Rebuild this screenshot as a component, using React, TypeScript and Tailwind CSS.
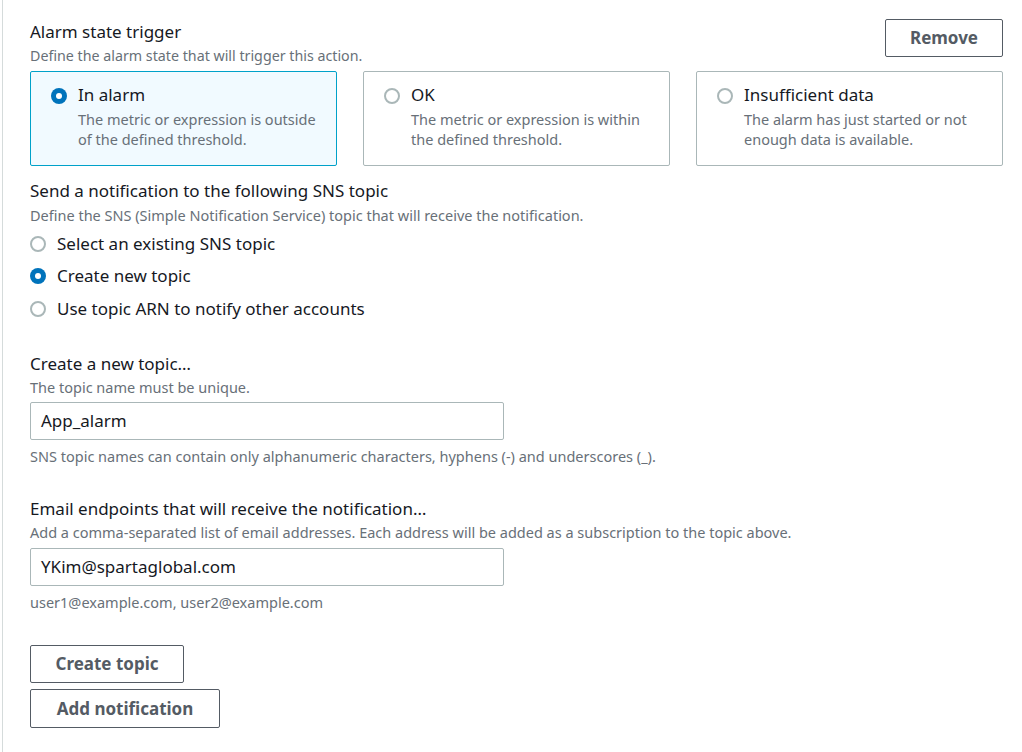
import React from 'react';

const font = { fontFamily: '"Noto Sans", "Open Sans", Arial, sans-serif' };

function Radio({ checked }: { checked: boolean }) {
  return checked ? (
    <span className="w-4 h-4 rounded-full bg-[#0073bb] flex items-center justify-center shrink-0">
      <span className="block w-1.5 h-1.5 rounded-full bg-white" />
    </span>
  ) : (
    <span className="block w-4 h-4 rounded-full border-2 border-[#aab7b8] bg-white shrink-0" />
  );
}

const states = [
  { label: 'In alarm', desc: 'The metric or expression is outside of the defined threshold.', checked: true },
  { label: 'OK', desc: 'The metric or expression is within the defined threshold.', checked: false },
  { label: 'Insufficient data', desc: 'The alarm has just started or not enough data is available.', checked: false },
];

const topics = [
  { label: 'Select an existing SNS topic', checked: false },
  { label: 'Create new topic', checked: true },
  { label: 'Use topic ARN to notify other accounts', checked: false },
];

export default function App() {
  return (
    <div style={font} className="w-[1022px] h-[752px] bg-white flex overflow-hidden text-[#16191f]">
      <div className="w-[3px] shrink-0 border-r border-[#d5dbdb]" />
      <div className="flex-1 pl-[27px] pr-[19px]">
        <div className="flex justify-between items-start pt-[19px]">
          <div className="pt-[3px]">
            <h3 className="text-[17px] leading-[20px]">Alarm state trigger</h3>
            <p className="text-[14.25px] leading-[20px] text-[#687078] mt-[4px]">Define the alarm state that will trigger this action.</p>
          </div>
          <button className="w-[118px] h-[38px] border border-[#545b64] rounded-[2px] text-[17px] font-bold text-[#545b64]">Remove</button>
        </div>

        <div className="grid grid-cols-3 gap-[26px] mt-[5px]">
          {states.map((s) => (
            <div
              key={s.label}
              className={`h-[95px] rounded-[2px] border pl-[20px] pr-[6px] pt-[13px] flex gap-[11px] ${s.checked ? 'bg-[#f1faff] border-[#00a1c9]' : 'bg-white border-[#aab7b8]'}`}
            >
              <div className="pt-[3px]"><Radio checked={s.checked} /></div>
              <div>
                <div className="text-[17px] leading-[20px]">{s.label}</div>
                <div className="text-[14.5px] leading-[20px] text-[#687078] mt-[4px]">{s.desc}</div>
              </div>
            </div>
          ))}
        </div>

        <h3 className="text-[17px] leading-[20px] mt-[15px]">Send a notification to the following SNS topic</h3>
        <p className="text-[14.5px] leading-[20px] text-[#687078] mt-[4px]">Define the SNS (Simple Notification Service) topic that will receive the notification.</p>
        <div className="flex flex-col gap-[11.5px] mt-[8px]">
          {topics.map((t) => (
            <label key={t.label} className="flex items-center gap-[11px] h-[21px]">
              <Radio checked={t.checked} />
              <span className="text-[17px] leading-[20px]">{t.label}</span>
            </label>
          ))}
        </div>

        <h3 className="text-[17px] leading-[20px] mt-[35px]">Create a new topic…</h3>
        <p className="text-[14.5px] leading-[20px] text-[#687078] mt-[3px]">The topic name must be unique.</p>
        <div className="w-[474px] h-[38px] border border-[#aab7b8] rounded-[2px] mt-[5px] px-[10px] flex items-center text-[17px]">App_alarm</div>
        <p className="text-[14.5px] leading-[20px] text-[#687078] mt-[6px]">SNS topic names can contain only alphanumeric characters, hyphens (-) and underscores (_).</p>

        <h3 className="text-[17px] leading-[20px] mt-[33px]">Email endpoints that will receive the notification…</h3>
        <p className="text-[14.5px] leading-[20px] text-[#687078] mt-[3px]">Add a comma-separated list of email addresses. Each address will be added as a subscription to the topic above.</p>
        <div className="w-[474px] h-[38px] border border-[#aab7b8] rounded-[2px] mt-[6px] px-[10px] flex items-center text-[17px]">YKim@spartaglobal.com</div>
        <p className="text-[14.5px] leading-[20px] text-[#687078] mt-[6px]">user1@example.com, user2@example.com</p>

        <div className="flex flex-col items-start gap-[6px] mt-[33px]">
          <button className="w-[154px] h-[38px] border border-[#545b64] rounded-[2px] text-[17px] font-bold text-[#545b64]">Create topic</button>
          <button className="w-[190px] h-[39px] border border-[#545b64] rounded-[2px] text-[17px] font-bold text-[#545b64]">Add notification</button>
        </div>
      </div>
    </div>
  );
}
